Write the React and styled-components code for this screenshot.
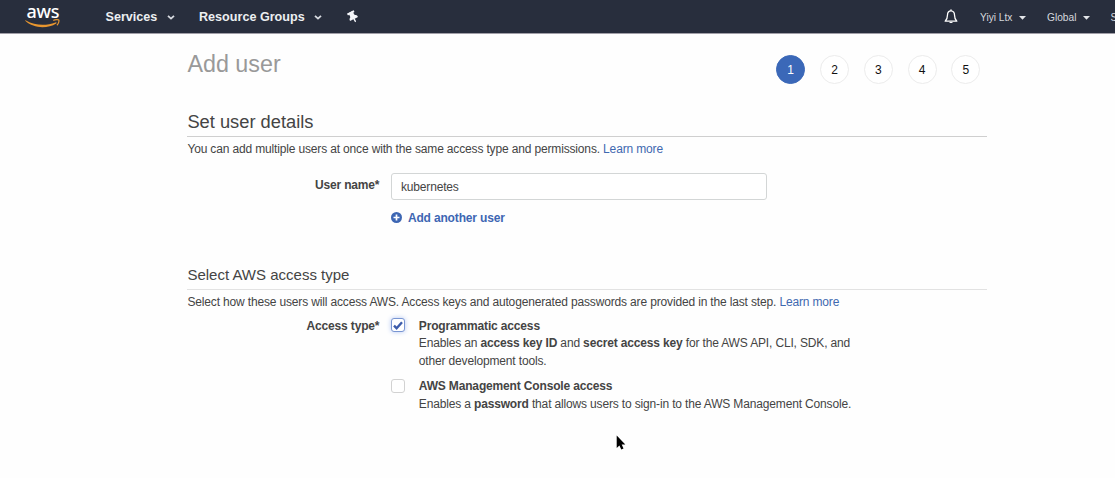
import React from "react";
import styled, { createGlobalStyle } from "styled-components";
import { FaThumbtack } from "react-icons/fa";

const GlobalStyle = createGlobalStyle`
  * { box-sizing: border-box; }
  html, body { margin: 0; background: #fefefe; overflow: hidden; }
  body {
    font-family: "Liberation Sans", Arial, sans-serif;
    font-size: 12px;
    line-height: 17.5px;
    color: #444;
  }
`;

const Page = styled.div`
  width: 100vw;
  height: 100vh;
  overflow: hidden;
`;

const NavBar = styled.header`
  display: flex;
  justify-content: space-between;
  height: 33px;
  padding-left: 25px;
  background: #282e3d;
  box-shadow: 0 1px 0 #a19fa8;
  overflow: hidden;
`;

const NavGroup = styled.div`
  display: flex;
  flex: none;
  align-items: center;
`;

const Logo = styled.div`
  width: 36px;
  height: 33px;
  margin-right: 44.5px;
`;

const LogoWord = styled.div`
  height: 18.5px;
  padding-left: 1.5px;
  font: 500 18px/22px "Noto Sans", sans-serif;
  letter-spacing: -0.3px;
  color: #fff;
`;

const Smile = styled.svg`
  display: block;
  width: 36px;
  height: 9px;
`;

const NavItem = styled.div`
  display: flex;
  align-items: center;
  width: ${(p) => p.$width}px;
  gap: ${(p) => (p.$small ? 6.5 : 9.5)}px;
  padding-top: ${(p) => (p.$small ? 2 : 1.5)}px;
  color: ${(p) => (p.$small ? "#d5d8de" : "#eceef1")};
  font-size: ${(p) => (p.$small ? 10.2 : 12.6)}px;
  font-weight: ${(p) => (p.$small ? 400 : 700)};
  white-space: nowrap;
`;

const Pin = styled(FaThumbtack)`
  width: 12px;
  height: 12px;
  color: #f4f6fa;
  transform: rotate(-28deg);
`;

const Bell = styled.svg`
  margin-right: 22px;
`;

const Content = styled.main`
  width: 800px;
  margin: 0 0 0 187.4px;
  letter-spacing: -0.155px;
`;

const TitleRow = styled.div`
  display: flex;
  justify-content: space-between;
  padding: 22px 7px 0 0;
`;

const Title = styled.h1`
  margin: -4px 0 0;
  font-size: 23.3px;
  line-height: 27px;
  letter-spacing: 0;
  font-weight: 400;
  color: #999;
`;

const Steps = styled.ol`
  display: flex;
  gap: 14.8px;
  margin: 0;
  padding: 0;
  list-style: none;
`;

const Step = styled.li`
  width: 29px;
  height: 29px;
  border: 1px solid ${(p) => (p.$active ? "#3b68b8" : "#ececec")};
  border-radius: 50%;
  background: ${(p) => (p.$active ? "#3b68b8" : "#fff")};
  color: ${(p) => (p.$active ? "#fff" : "#111")};
  letter-spacing: 0;
  line-height: 28px;
  text-align: center;
`;

const SectionTitle = styled.h2`
  margin: ${(p) => p.$top}px 0 0;
  height: ${(p) => (p.$minor ? 26 : 27)}px;
  border-bottom: 1px solid ${(p) => (p.$minor ? "#e2e2e2" : "#cfcfcf")};
  font-size: ${(p) => (p.$minor ? 15 : 18.3)}px;
  line-height: ${(p) => (p.$minor ? 22 : 23)}px;
  letter-spacing: 0;
  font-weight: 400;
  color: #444;
`;

const Intro = styled.p`
  margin: 4px 0 0;
  white-space: nowrap;
`;

const Link = styled.a`
  color: #3f69b0;
`;

const FormRow = styled.div`
  display: flex;
  margin-top: ${(p) => p.$top}px;
`;

const Label = styled.div`
  width: 192px;
  padding-top: ${(p) => p.$top || 0}px;
  font-weight: 700;
  text-align: right;
`;

const Field = styled.div`
  margin-left: 12px;
`;

const Input = styled.div`
  width: 375.5px;
  height: 27px;
  padding-left: 8.5px;
  border: 1px solid #d3d6d6;
  border-radius: 3px;
  background: #fff;
  line-height: 26px;
`;

const AddLink = styled.div`
  display: flex;
  align-items: center;
  gap: 6px;
  margin-top: 10px;
  color: #3d66b3;
  font-weight: 700;

  svg { margin-left: -0.5px; margin-top: -1px; }
`;

const Options = styled.div`
  display: flex;
  flex-direction: column;
  gap: 8px;
  margin-left: 12px;
`;

const Option = styled.div`
  display: flex;
  gap: 13.4px;
`;

const Box = styled.span`
  display: flex;
  align-items: center;
  justify-content: center;
  flex: none;
  width: 14px;
  height: 14px;
  margin-top: 0.5px;
  border: 1px solid ${(p) => (p.$checked ? "#7895d2" : "#d2d2d2")};
  border-radius: 3px;
  background: #fff;
  box-shadow: ${(p) => (p.$checked ? "0 0 5px #b5c8f3" : "none")};
`;

const OptionText = styled.div`
  white-space: nowrap;
`;

const Pointer = styled.svg`
  position: absolute;
  left: 616px;
  top: 435px;
`;

const Chevron = () => (
  <svg width="8" height="5" viewBox="0 0 8 5">
    <path d="M1 .8l3 2.800L7 .8" fill="none" stroke="#d8dbe1" strokeWidth="1.800" />
  </svg>
);

const Caret = () => (
  <svg width="7" height="4" viewBox="0 0 7 4">
    <path d="M0 0h7L3.500 3.800z" fill="#e3e5e9" />
  </svg>
);

export default function App() {
  return (
    <Page>
      <GlobalStyle />
      <NavBar>
        <NavGroup>
          <Logo>
            <LogoWord>aws</LogoWord>
            <Smile viewBox="0 0 36 9">
              <path d="M1 1.400C10 6.600 21 7 30.500 3.400c1-.4 1.500.4.7 1C22.500 10 8.500 9.500.5 2.100c-.5-.5 0-1 .5-.7z" fill="#e8962f" />
              <path d="M28.300 1.500c1.900-1.100 4.900-1.100 5.500-.5.500.7-.2 3.800-1.900 5.200" fill="none" stroke="#e8962f" strokeWidth="1.200" />
            </Smile>
          </Logo>
          <NavItem $width={93.5}>Services <Chevron /></NavItem>
          <NavItem $width={148}>Resource Groups <Chevron /></NavItem>
          <Pin />
        </NavGroup>
        <NavGroup>
          <Bell width="14" height="16" viewBox="0 0 14 16">
            <path d="M7 1.800C4.500 1.800 3.500 4 3.500 6c0 3.200-.8 4.700-2.300 6.200h11.600C11.300 10.700 10.500 9.200 10.500 6c0-2-1-4.200-3.500-4.200z" fill="none" stroke="#fff" strokeWidth="1.300" strokeLinejoin="round" />
            <path d="M6.200.5h1.600v1.300H6.200zM5.200 13h3.600c-.2 1.400-3.400 1.400-3.600 0z" fill="#fff" />
          </Bell>
          <NavItem $small $width={67}>Yiyi Ltx <Caret /></NavItem>
          <NavItem $small $width={63.5}>Global <Caret /></NavItem>
          <NavItem $small $width={4.5}>Support</NavItem>
        </NavGroup>
      </NavBar>
      <Content>
        <TitleRow>
          <Title>Add user</Title>
          <Steps>
            {[1, 2, 3, 4, 5].map((n) => (
              <Step key={n} $active={n === 1}>{n}</Step>
            ))}
          </Steps>
        </TitleRow>
        <SectionTitle $top={26}>Set user details</SectionTitle>
        <Intro>
          You can add multiple users at once with the same access type and permissions. <Link>Learn more</Link>
        </Intro>
        <FormRow $top={14}>
          <Label $top={4}>User name*</Label>
          <Field>
            <Input>kubernetes</Input>
            <AddLink>
              <svg width="11" height="11" viewBox="0 0 11 11">
                <circle cx="5.500" cy="5.500" r="5.500" fill="#3d66b3" />
                <path d="M5.500 2.500v6M2.500 5.500h6" stroke="#fff" strokeWidth="1.700" />
              </svg>
              Add another user
            </AddLink>
          </Field>
        </FormRow>
        <SectionTitle $top={36.5} $minor>Select AWS access type</SectionTitle>
        <Intro>
          Select how these users will access AWS. Access keys and autogenerated passwords are provided in the last step. <Link>Learn more</Link>
        </Intro>
        <FormRow $top={6.6}>
          <Label>Access type*</Label>
          <Options>
            <Option>
              <Box $checked>
                <svg width="10" height="9" viewBox="0 0 10 9">
                  <path d="M1 4.700l2.600 2.500L9 1.300" fill="none" stroke="#3d5cab" strokeWidth="2.400" />
                </svg>
              </Box>
              <OptionText>
                <b>Programmatic access</b><br />
                Enables an <b>access key ID</b> and <b>secret access key</b> for the AWS API, CLI, SDK, and<br />
                other development tools.
              </OptionText>
            </Option>
            <Option>
              <Box />
              <OptionText>
                <b>AWS Management Console access</b><br />
                Enables a <b>password</b> that allows users to sign-in to the AWS Management Console.
              </OptionText>
            </Option>
          </Options>
        </FormRow>
      </Content>
      <Pointer width="10" height="15" viewBox="0 0 10 15">
        <path d="M.7.5v12.400l2.700-2.500 1.900 4 2.200-1-1.800-3.900h3.600z" fill="#000" />
      </Pointer>
    </Page>
  );
}
